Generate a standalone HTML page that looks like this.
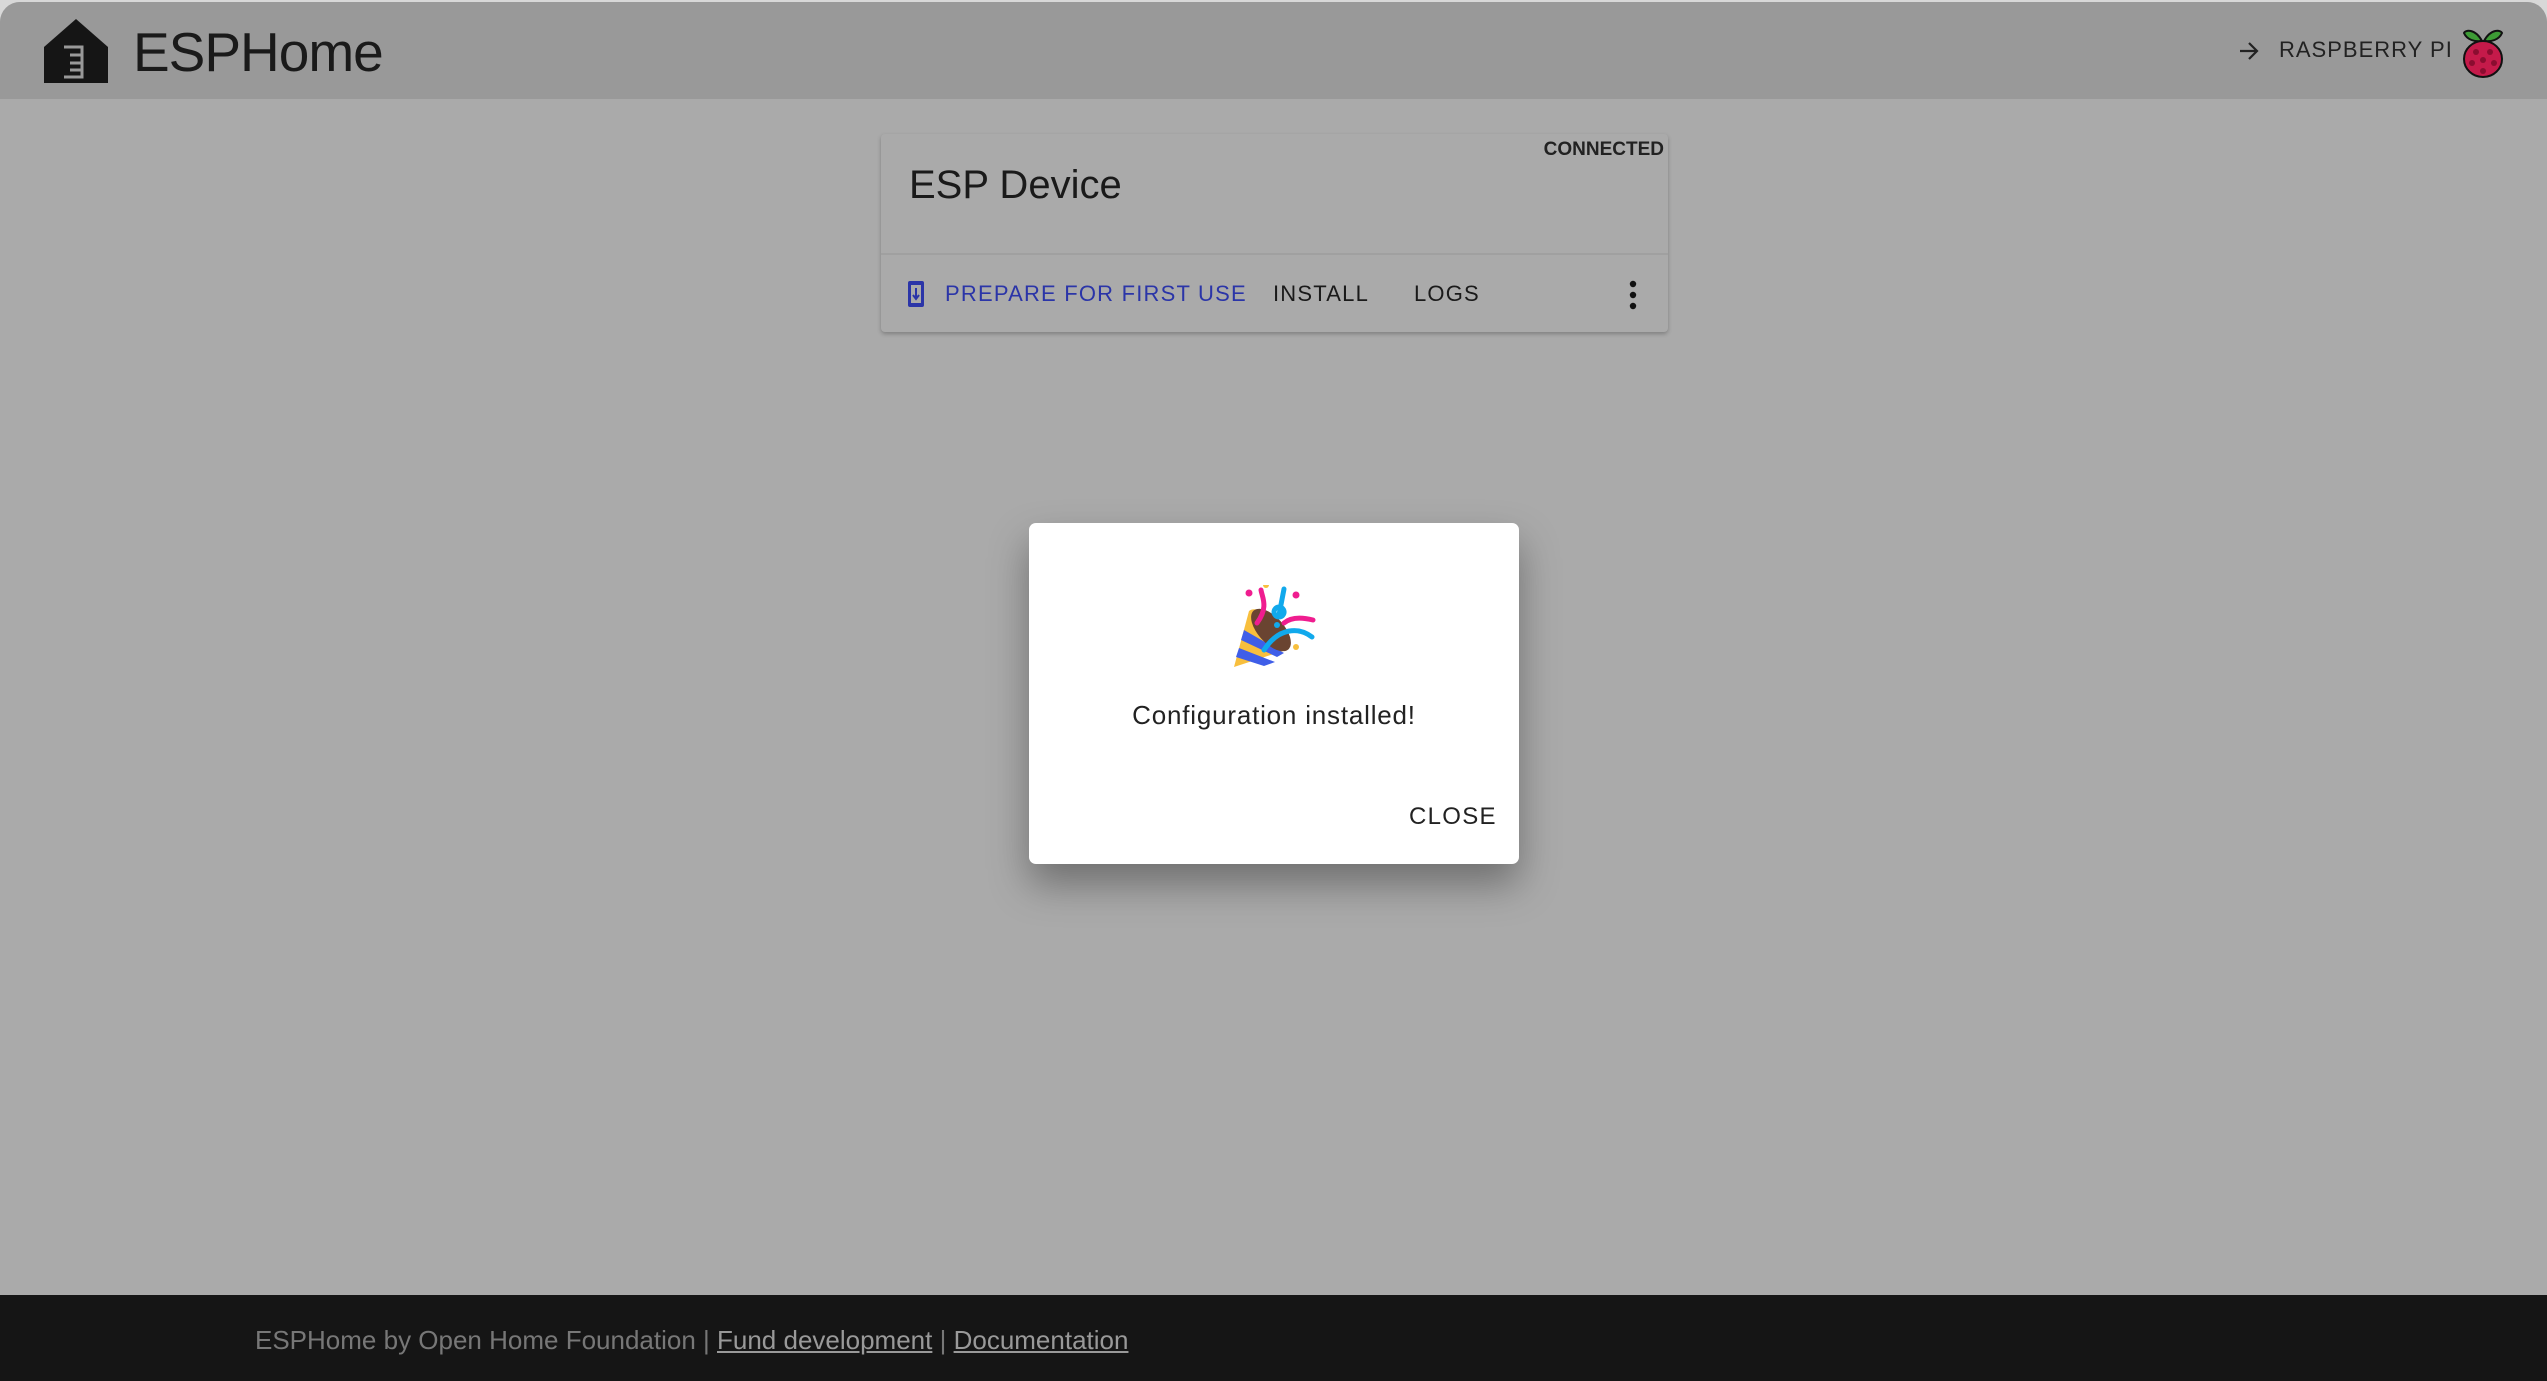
<!DOCTYPE html>
<html><head><meta charset="utf-8"><style>
html,body{margin:0;padding:0;width:2547px;height:1381px;overflow:hidden;background:#d8d8d8;font-family:"Liberation Sans","DejaVu Sans",sans-serif}
#app{position:absolute;left:0;top:2px;width:2547px;height:1379px;background:#aaaaaa;border-radius:20px 20px 0 0;overflow:hidden}
#hdr{position:absolute;left:0;top:0;width:100%;height:97px;background:#999999}
.logo{position:absolute;left:42px;top:15px}
.brand{position:absolute;left:133px;top:18px;font-size:55px;color:#1a1a1a;letter-spacing:-1px}
.rpi{position:absolute;left:2279px;top:35px;font-size:22px;letter-spacing:1px;color:#222;white-space:nowrap}
.card{position:absolute;left:881px;top:132px;width:787px;height:198px;background:#aaaaaa;border-radius:4px;box-shadow:0 2px 4px rgba(0,0,0,.25)}
.card .t{position:absolute;left:28px;top:29px;font-size:40px;color:#1a1a1a}
.card .c{position:absolute;right:4px;top:5px;font-size:19px;font-weight:bold;color:#222}
.card .div{position:absolute;left:0;right:0;top:119px;border-top:2px solid #a0a0a0}
.act{position:absolute;top:147px;font-size:22px;letter-spacing:1.2px;color:#1a1a1a;white-space:nowrap}
.dlg{position:absolute;left:1029px;top:521px;width:490px;height:341px;background:#fff;border-radius:7px;box-shadow:0 20px 40px rgba(0,0,0,.35)}
.dlg .m{position:absolute;left:0;right:0;top:177px;text-align:center;font-size:26px;letter-spacing:0.8px;color:#222}
.dlg .cl{position:absolute;left:380px;top:280px;font-size:24px;letter-spacing:1.3px;color:#222}
#ftr{position:absolute;left:0;top:1293px;width:100%;height:90px;background:#151515;font-size:26px;color:#777}
#ftr .in{position:absolute;left:255px;top:30px;white-space:nowrap}
#ftr a{color:#999;text-decoration:underline}
</style></head><body><div id="app">
<div id="hdr">
<svg class="logo" width="68" height="68" viewBox="0 0 68 68"><path d="M34 2 L66 30 V66 H2 V30 Z" fill="#151515"/><path d="M22 30 H40 V60 H22 M28 38 H40 M28 46 H40 M28 53 H40" fill="none" stroke="#999" stroke-width="3"/></svg>
<div class="brand">ESPHome</div>
<svg style="position:absolute;left:2238px;top:39px" width="22" height="20" viewBox="0 0 22 20"><path d="M2 10 H19 M11 2 L19 10 L11 18" fill="none" stroke="#222" stroke-width="2.2"/></svg>
<div class="rpi">RASPBERRY PI</div>
<svg style="position:absolute;left:2461px;top:22px" width="44" height="56" viewBox="0 0 44 56"><path d="M21 17 C14 4 4 6 3 9 C6 16 14 18 21 17 Z M23 17 C30 4 40 6 41 9 C38 16 30 18 23 17Z" fill="#3d9b35" stroke="#111" stroke-width="2"/><ellipse cx="22" cy="35" rx="19" ry="18" fill="#c51a4a" stroke="#111" stroke-width="2"/><g fill="#8a0d30"><circle cx="15" cy="28" r="3"/><circle cx="29" cy="28" r="3"/><circle cx="22" cy="36" r="3"/><circle cx="11" cy="39" r="3"/><circle cx="33" cy="39" r="3"/><circle cx="22" cy="47" r="3"/></g></svg>
</div>
<div class="card">
<div class="c">CONNECTED</div>
<div class="t">ESP Device</div>
<div class="div"></div>
<svg style="position:absolute;left:26px;top:146px" width="18" height="28" viewBox="0 0 18 28"><rect x="1" y="1" width="16" height="26" rx="2" fill="#2b35a8"/><rect x="4" y="5" width="10" height="18" fill="#aaa"/><path d="M9 8 V19 M6 15 L9 19 L12 15" stroke="#2b35a8" stroke-width="2" fill="none"/></svg>
<div class="act" style="left:64px;color:#2b35a8">PREPARE FOR FIRST USE</div>
<div class="act" style="left:392px">INSTALL</div>
<div class="act" style="left:533px">LOGS</div>
<svg style="position:absolute;left:747px;top:146px" width="10" height="30"><circle cx="5" cy="4" r="3.2" fill="#111"/><circle cx="5" cy="15" r="3.2" fill="#111"/><circle cx="5" cy="26" r="3.2" fill="#111"/></svg>
</div>
<div class="dlg">
<svg style="position:absolute;left:200px;top:62px" width="90" height="90" viewBox="0 0 90 90">
<path d="M5 82 L20 26 C30 18 55 38 60 64 Z" fill="#f8bf3d"/>
<path d="M10 63 L46 77 L35 81 L7 72 Z M15 45 L55 68 L48 72 L12 55 Z" fill="#3f5ee8"/>
<ellipse cx="42" cy="45" rx="13" ry="26" transform="rotate(-42 42 45)" fill="#6a4431"/>
<path d="M28 38 C40 22 33 12 32 5" stroke="#ef1d8f" stroke-width="5" fill="none" stroke-linecap="round"/>
<path d="M35 65 C50 42 70 42 83 52" stroke="#11a9ec" stroke-width="5" fill="none" stroke-linecap="round"/>
<path d="M55 38 C62 32 72 32 84 35" stroke="#ef1d8f" stroke-width="5" fill="none" stroke-linecap="round"/>
<path d="M55 4 L50 30 M50 22 a5 5 0 1 0 0.1 0" stroke="#11a9ec" stroke-width="5" fill="none" stroke-linecap="round"/>
<circle cx="20" cy="8" r="3.5" fill="#ef1d8f"/><circle cx="37" cy="0" r="3" fill="#f8bf3d"/><circle cx="67" cy="10" r="3.5" fill="#ef1d8f"/><circle cx="67" cy="62" r="3" fill="#f8bf3d"/><circle cx="48" cy="40" r="3" fill="#11a9ec"/>
</svg>
<div class="m">Configuration installed!</div>
<div class="cl">CLOSE</div>
</div>
<div id="ftr"><div class="in">ESPHome by Open Home Foundation | <a>Fund development</a> | <a>Documentation</a></div></div>
</div></body></html>
